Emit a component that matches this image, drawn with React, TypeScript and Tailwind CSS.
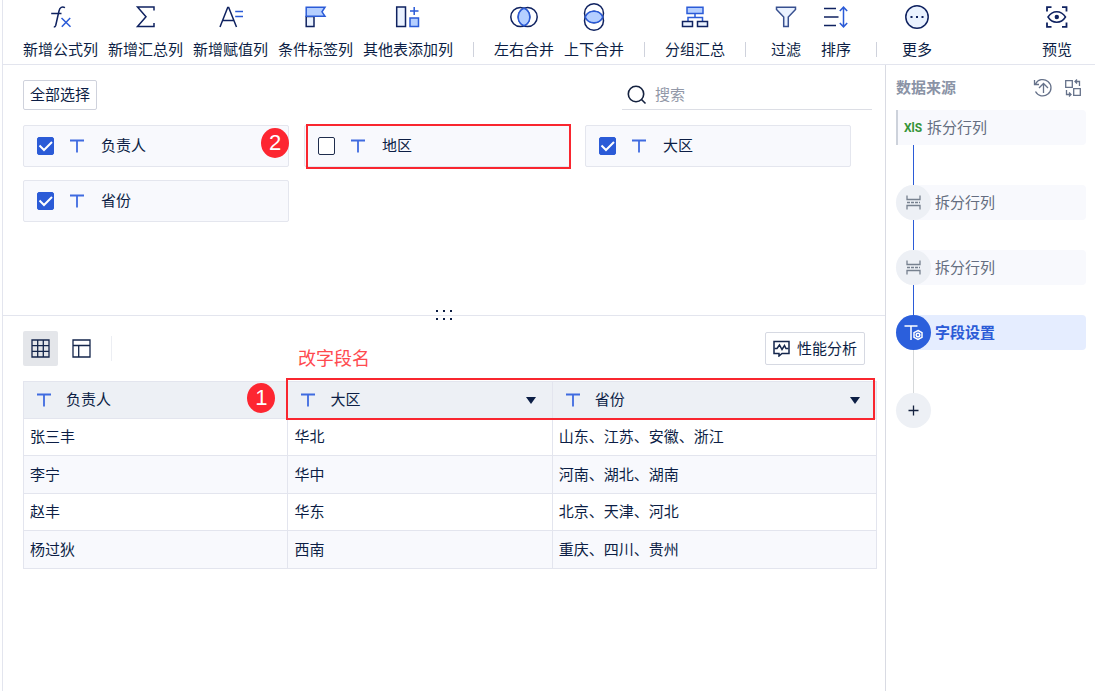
import React from 'react';

interface IconProps {
  className?: string;
}

interface ToolItem {
  label: string;
  icon: React.ReactNode;
}

interface Field {
  name: string;
  checked: boolean;
  marked?: boolean;
}

const NAVY = '#0f2260';
const BLUE = '#2b5bd7';
const PALE = '#b5cfff';
const MIST = '#eaf2ff';

const ToolSvg: React.FC<{ children: React.ReactNode }> = ({ children }) => (
  <svg width="28" height="28" viewBox="0 0 28 28" fill="none" stroke={NAVY} strokeWidth="1.5" aria-hidden="true">
    {children}
  </svg>
);

const icons = {
  formula: (
    <ToolSvg>
      <path d="M18 4.6C15.2 3.4 12.8 4.2 12 8L8.7 22.5C8.4 23.6 7.800 24 6.800 24M4.200 10.500H14.500" />
      <path d="M14.500 15L23.500 23.800M23.200 15L14.800 23.800" stroke={BLUE} />
    </ToolSvg>
  ),
  sum: (
    <ToolSvg>
      <path d="M22 7.500V4H5.500L14 13.800L5.500 23.500H22V20" />
    </ToolSvg>
  ),
  assign: (
    <ToolSvg>
      <path d="M3 24L10.700 4.500H11.700L19.500 24M5.700 17.500H16.800" />
      <path d="M18.200 8.500H26M18.200 13.500H26" stroke={BLUE} />
    </ToolSvg>
  ),
  flag: (
    <ToolSvg>
      <path d="M4.200 13.500H12V23.500H4.200Z" fill={MIST} />
      <path d="M4.200 4.200H23L20 8.800L23 13.300H4.200Z" fill={PALE} stroke={BLUE} />
    </ToolSvg>
  ),
  addColumn: (
    <ToolSvg>
      <path d="M2.700 4H11.500V23.500H2.700Z" fill={MIST} />
      <path d="M16 15H24.500V23.500H16Z" fill={PALE} stroke={BLUE} />
      <path d="M20.200 4V12M16 8H24.500" stroke={BLUE} />
    </ToolSvg>
  ),
  joinHorizontal: (
    <ToolSvg>
      <circle cx="10.300" cy="14" r="9.500" />
      <circle cx="17.700" cy="14" r="9.500" />
      <path d="M14 5.250A9.500 9.500 0 0 1 14 22.750A9.500 9.500 0 0 1 14 5.250Z" fill={PALE} stroke={BLUE} />
    </ToolSvg>
  ),
  joinVertical: (
    <ToolSvg>
      <circle cx="14" cy="10.300" r="9.500" />
      <circle cx="14" cy="17.700" r="9.500" />
      <path d="M5.250 14A9.500 9.500 0 0 1 22.750 14A9.500 9.500 0 0 1 5.250 14Z" fill={PALE} stroke={BLUE} />
    </ToolSvg>
  ),
  group: (
    <ToolSvg>
      <path d="M6 4.200H22V10.500H6Z" fill={PALE} stroke={BLUE} />
      <path d="M14 10.500V14.500M7 18V14.500H21.500V18" stroke={BLUE} />
      <path d="M1.500 18.500H11.500V23.500H1.500ZM16.500 18.500H26.500V23.500H16.500Z" fill={MIST} />
    </ToolSvg>
  ),
  filter: (
    <ToolSvg>
      <path d="M4.500 4.200H23.500V6.500L16.300 14V23.500H11.700V14L4.500 6.500Z" fill={MIST} stroke="#38508f" />
    </ToolSvg>
  ),
  sort: (
    <ToolSvg>
      <path d="M2 5.500H14M2 14H16.500M2 22.500H14" />
      <path d="M21.500 4.500V23.500M17.800 8L21.500 4.200L25.200 8M17.800 20L21.500 23.800L25.200 20" stroke={BLUE} />
    </ToolSvg>
  ),
  more: (
    <ToolSvg>
      <circle cx="14" cy="14" r="11.200" fill={MIST} />
      <path d="M7.500 14H9.500M13 14H15M18.500 14H20.500" strokeWidth="2" />
    </ToolSvg>
  ),
  preview: (
    <ToolSvg>
      <path d="M4 8.500V4.200H8.500M19 4.200H23.500V8.500M23.500 19.500V23.800H19M8.500 23.800H4V19.500" strokeWidth="1.800" />
      <path d="M5 14C9.500 7 18 7 22.500 14C18 21 9.500 21 5 14Z" />
      <circle cx="13.800" cy="14" r="2.200" fill={NAVY} stroke="none" />
    </ToolSvg>
  ),
};

const TextTypeIcon: React.FC<IconProps> = ({ className = '' }) => (
  <svg width="14" height="14" viewBox="0 0 14 14" fill="none" className={className} aria-hidden="true">
    <path d="M0 1.500H14M7 1.500V13.500" stroke="#3f6be0" strokeWidth="1.800" />
  </svg>
);

const SplitIcon = () => (
  <svg width="15" height="15" viewBox="0 0 15 15" fill="none" stroke="#77818f" strokeWidth="1.300" aria-hidden="true">
    <path d="M1 .5V4.500H14V.5M1 14.500V10.500H14V14.500" />
    <path d="M1 7.500H14" strokeDasharray="3 1" />
  </svg>
);

const FieldSettingIcon = () => (
  <svg width="19" height="19" viewBox="0 0 19 19" fill="none" stroke="#fff" strokeWidth="1.500" aria-hidden="true">
    <path d="M.5 3H13.500M7 3V17" />
    <path d="M14 7.500L18 9.700V14.300L14 16.500L10 14.300V9.700Z" />
    <circle cx="14" cy="12" r="1.800" />
  </svg>
);

const toolGroups: ToolItem[][] = [
  [
    { label: '新增公式列', icon: icons.formula },
    { label: '新增汇总列', icon: icons.sum },
    { label: '新增赋值列', icon: icons.assign },
    { label: '条件标签列', icon: icons.flag },
    { label: '其他表添加列', icon: icons.addColumn },
  ],
  [
    { label: '左右合并', icon: icons.joinHorizontal },
    { label: '上下合并', icon: icons.joinVertical },
  ],
  [{ label: '分组汇总', icon: icons.group }],
  [
    { label: '过滤', icon: icons.filter },
    { label: '排序', icon: icons.sort },
  ],
  [{ label: '更多', icon: icons.more }],
];

const fields: Field[] = [
  { name: '负责人', checked: true },
  { name: '地区', checked: false, marked: true },
  { name: '大区', checked: true },
  { name: '省份', checked: true },
];

const rows = [
  ['张三丰', '华北', '山东、江苏、安徽、浙江'],
  ['李宁', '华中', '河南、湖北、湖南'],
  ['赵丰', '华东', '北京、天津、河北'],
  ['杨过狄', '西南', '重庆、四川、贵州'],
];

const ToolButton: React.FC<ToolItem> = ({ label, icon }) => (
  <button type="button" className="flex min-w-10 flex-col items-center gap-[9px] whitespace-nowrap">
    {icon}
    <span className="leading-5">{label}</span>
  </button>
);

const Badge: React.FC<{ value: number; className: string }> = ({ value, className }) => (
  <span
    className={`absolute flex h-[30px] w-7 items-center justify-center rounded-[50%] bg-[#fd2631] text-[22px] leading-none text-white ${className}`}
  >
    {value}
  </span>
);

const Toolbar = () => (
  <header className="flex items-start justify-between border-b border-[#e3e5ee] pt-[3px] pr-[18px] pb-1 pl-5">
    <div className="flex gap-[10px]">
      {toolGroups.map((group, index) => (
        <React.Fragment key={index}>
          {index > 0 && <span className="mx-[10px] mb-[3px] h-[15px] w-px self-end bg-[#cfd2dc]" />}
          {group.map((item) => (
            <ToolButton key={item.label} {...item} />
          ))}
        </React.Fragment>
      ))}
    </div>
    <ToolButton label="预览" icon={icons.preview} />
  </header>
);

const FieldCard: React.FC<{ field: Field; badge?: number }> = ({ field, badge }) => (
  <label className="relative flex h-[42px] items-center rounded-xs border border-[#e4e6ee] bg-[#f8f9fd] pl-[13px]">
    <span className="relative flex">
      <input
        type="checkbox"
        defaultChecked={field.checked}
        className="peer h-[18px] w-[17px] appearance-none rounded-xs border border-[#1f2d4d] bg-white checked:border-[#2b5bd7] checked:bg-[#2b5bd7]"
      />
      <svg
        viewBox="0 0 17 18"
        fill="none"
        className="pointer-events-none absolute inset-0 hidden h-[18px] w-[17px] peer-checked:block"
        aria-hidden="true"
      >
        <path d="M2.500 8.500L7 13L15 5" stroke="#fff" strokeWidth="2" />
      </svg>
    </span>
    <TextTypeIcon className="ml-4" />
    <span className="ml-[17px]">{field.name}</span>
    {badge && <Badge value={badge} className="top-[2px] -right-px" />}
    {field.marked && <span className="absolute -top-[2px] -right-[2px] -bottom-[3px] left-px border-2 border-[#f9262f]" />}
  </label>
);

const FieldPanel = () => (
  <section className="relative min-h-[251px] border-b border-[#e3e5ee] pt-[15px] pr-[13px] pl-5">
    <div className="flex items-center justify-between">
      <button type="button" className="h-[30px] rounded-xs border border-[#cfd2dc] px-[6px] leading-5">
        全部选择
      </button>
      <div className="flex h-[30px] w-[250px] items-center border-b border-[#dcdee5] pl-[5px]">
        <svg width="20" height="20" viewBox="0 0 20 20" fill="none" stroke="#14213f" strokeWidth="1.600" aria-hidden="true">
          <circle cx="9" cy="9" r="7.700" />
          <path d="M14.500 14.500L18.500 18.500" />
        </svg>
        <input
          type="text"
          aria-label="搜索"
          placeholder="搜索"
          className="ml-2 min-w-0 flex-1 bg-transparent outline-none placeholder:text-[#9298a8]"
        />
      </div>
    </div>
    <div className="mt-[15px] mr-[21px] grid grid-cols-3 gap-x-[15px] gap-y-[13px]">
      {fields.map((field, index) => (
        <FieldCard key={field.name} field={field} badge={index === 0 ? 2 : undefined} />
      ))}
    </div>
    <svg
      width="18"
      height="12"
      viewBox="0 0 18 12"
      fill="#0c1e45"
      className="absolute -bottom-[6px] left-1/2 -translate-x-1/2"
      aria-hidden="true"
    >
      <path d="M1 1h2v2H1zM8 1h2v2H8zM15 1h2v2h-2zM1 9h2v2H1zM8 9h2v2H8zM15 9h2v2h-2z" />
    </svg>
  </section>
);

const HeaderCell: React.FC<{ name: string; menu?: boolean; badge?: number }> = ({ name, menu, badge }) => (
  <th className="relative border border-[#e3e5ee] pr-4 pl-[13px] text-left font-normal">
    <div className="flex items-center">
      <TextTypeIcon />
      <span className="ml-[15px] flex-1">{name}</span>
      {menu && (
        <button type="button" aria-label={name}>
          <svg width="10" height="7" viewBox="0 0 10 7" fill="#0c1e45" aria-hidden="true">
            <path d="M0 0H10L5 7Z" />
          </svg>
        </button>
      )}
    </div>
    {badge && <Badge value={badge} className="top-px right-3" />}
  </th>
);

const DataPanel = () => (
  <section className="pt-[15px] pr-2 pl-5">
    <div className="flex items-center">
      <button type="button" aria-label="表格" className="flex h-[35px] w-[35px] items-center justify-center rounded-xs bg-[#e4e6ea]">
        <svg width="19" height="19" viewBox="0 0 19 19" fill="none" stroke="#14264c" strokeWidth="1.300" aria-hidden="true">
          <path d="M1 1H18V18H1ZM1 6.700H18M1 12.300H18M6.700 1V18M12.300 1V18" />
        </svg>
      </button>
      <button type="button" aria-label="布局" className="ml-[6px] flex h-[35px] w-[35px] items-center justify-center">
        <svg width="19" height="19" viewBox="0 0 19 19" fill="none" stroke="#14264c" strokeWidth="1.300" aria-hidden="true">
          <path d="M1 1H18V18H1ZM1 6.500H18M6.700 6.500V18" />
        </svg>
      </button>
      <span className="ml-3 h-[25px] w-px bg-[#eceef3]" />
      <span className="ml-[186px] self-end text-lg leading-[14px] text-[#ff4a4f]">改字段名</span>
      <button
        type="button"
        className="mr-3 ml-auto flex h-[33px] items-center gap-[7px] rounded-xs border border-[#d6d9e2] px-[7px]"
      >
        <svg width="17" height="17" viewBox="0 0 17 17" fill="none" stroke="#14264c" strokeWidth="1.500" aria-hidden="true">
          <path d="M1 1.500H16V13.500H9L6 16V13.500H1Z" />
          <path d="M1.500 8.500H4L6.500 5L9 9.500L11.500 5.500L13 8.500H15.500" />
        </svg>
        性能分析
      </button>
    </div>
    <div className="relative mt-[15px]">
      <table className="w-full table-fixed border-collapse">
        <colgroup>
          <col className="w-[31%]" />
          <col className="w-[31%]" />
          <col />
        </colgroup>
        <thead>
          <tr className="h-[37px] bg-[#edf0f5]">
            <HeaderCell name="负责人" badge={1} />
            <HeaderCell name="大区" menu />
            <HeaderCell name="省份" menu />
          </tr>
        </thead>
        <tbody>
          {rows.map((row) => (
            <tr key={row[0]} className="h-[37px] even:h-[38px] even:bg-[#f8f9fd]">
              {row.map((cell) => (
                <td key={cell} className="border border-[#e3e5ee] px-[6px]">
                  {cell}
                </td>
              ))}
            </tr>
          ))}
        </tbody>
      </table>
      <span className="pointer-events-none absolute -top-[3px] right-[2px] left-[31%] -ml-[2px] h-[42px] border-2 border-[#f9262f]" />
    </div>
  </section>
);

const FlowNode: React.FC<{ label: string; icon: React.ReactNode; active?: boolean }> = ({ label, icon, active }) => (
  <button
    type="button"
    className={`flex h-[35px] w-full items-center rounded-l-[17px] rounded-r-[4px] ${
      active ? 'bg-[#e5edff] font-bold text-[#2b5bd7]' : 'bg-[#f8f9fd] text-[#646d80]'
    }`}
  >
    <span
      className={`flex h-[35px] w-[35px] items-center justify-center rounded-full ${
        active ? 'bg-[#2b5fdc]' : 'bg-[#edf0f5]'
      }`}
    >
      {icon}
    </span>
    <span className="ml-1">{label}</span>
  </button>
);

const Sidebar = () => (
  <aside className="w-[210px] shrink-0 border-l border-[#d9dbe3] px-[10px] pr-[9px]">
    <div className="flex h-[45px] items-center justify-between pr-1">
      <h2 className="font-bold text-[#8a93a6]">数据来源</h2>
      <div className="flex gap-[11px] text-[#66728a]">
        <button type="button" aria-label="更新">
          <svg width="20" height="20" viewBox="0 0 20 20" fill="none" stroke="currentColor" strokeWidth="1.300" aria-hidden="true">
            <path d="M2.500 6A8.200 8.200 0 1 1 2.500 13.500M1.500 2V6.500H6" />
            <path d="M10.500 15V5.500M6 10L10.500 5.500L15 10" />
          </svg>
        </button>
        <button type="button" aria-label="布局切换">
          <svg width="18" height="20" viewBox="0 0 18 20" fill="none" stroke="currentColor" strokeWidth="1.300" aria-hidden="true">
            <path d="M1.700 2.700H8.300V9.300H1.700ZM9.700 10.700H16.300V17.300H9.700Z" />
            <path d="M11 3.500H15.500V8M13 1.500L11 3.500L13 5.500M2.500 12V16.500H7M5 14.500L7 16.500L5 18.500" />
          </svg>
        </button>
      </div>
    </div>
    <div className="flex flex-col items-start">
      <button
        type="button"
        className="flex h-[35px] w-full items-center rounded-r-[4px] border-l-2 border-[#cdd2db] bg-[#f8f9fd] pl-[6px] text-[#646d80]"
      >
        <span className="w-[18px] font-['Roboto',sans-serif] text-xs font-bold text-[#35943a]">XlS</span>
        <span className="ml-[5px]">拆分行列</span>
      </button>
      <span className="ml-[17px] h-10 w-px bg-[#2b5bd7]" />
      <FlowNode label="拆分行列" icon={<SplitIcon />} />
      <span className="ml-[17px] h-[30px] w-px bg-[#2b5bd7]" />
      <FlowNode label="拆分行列" icon={<SplitIcon />} />
      <span className="ml-[17px] h-[30px] w-px bg-[#2b5bd7]" />
      <FlowNode label="字段设置" icon={<FieldSettingIcon />} active />
      <span className="ml-[17px] h-[43px] w-px bg-[#d5d8da]" />
      <button type="button" aria-label="添加" className="flex h-[35px] w-[35px] items-center justify-center rounded-full bg-[#edf0f5]">
        <svg width="11" height="11" viewBox="0 0 11 11" stroke="#14213f" strokeWidth="1.300" aria-hidden="true">
          <path d="M5.500 .5V10.500M.5 5.500H10.500" />
        </svg>
      </button>
    </div>
  </aside>
);

const App = () => {
  return (
    <div className="flex min-h-screen flex-col bg-white pl-[2px] font-['Liberation_Sans','Noto_Sans_CJK_SC',sans-serif] text-[15px] leading-5 text-[#0c1e45]">
      <div className="flex flex-1 flex-col border-l border-[#e3e5ee]">
        <Toolbar />
        <div className="flex flex-1">
          <main className="min-w-0 flex-1">
            <FieldPanel />
            <DataPanel />
          </main>
          <Sidebar />
        </div>
      </div>
    </div>
  );
};

export default App;
